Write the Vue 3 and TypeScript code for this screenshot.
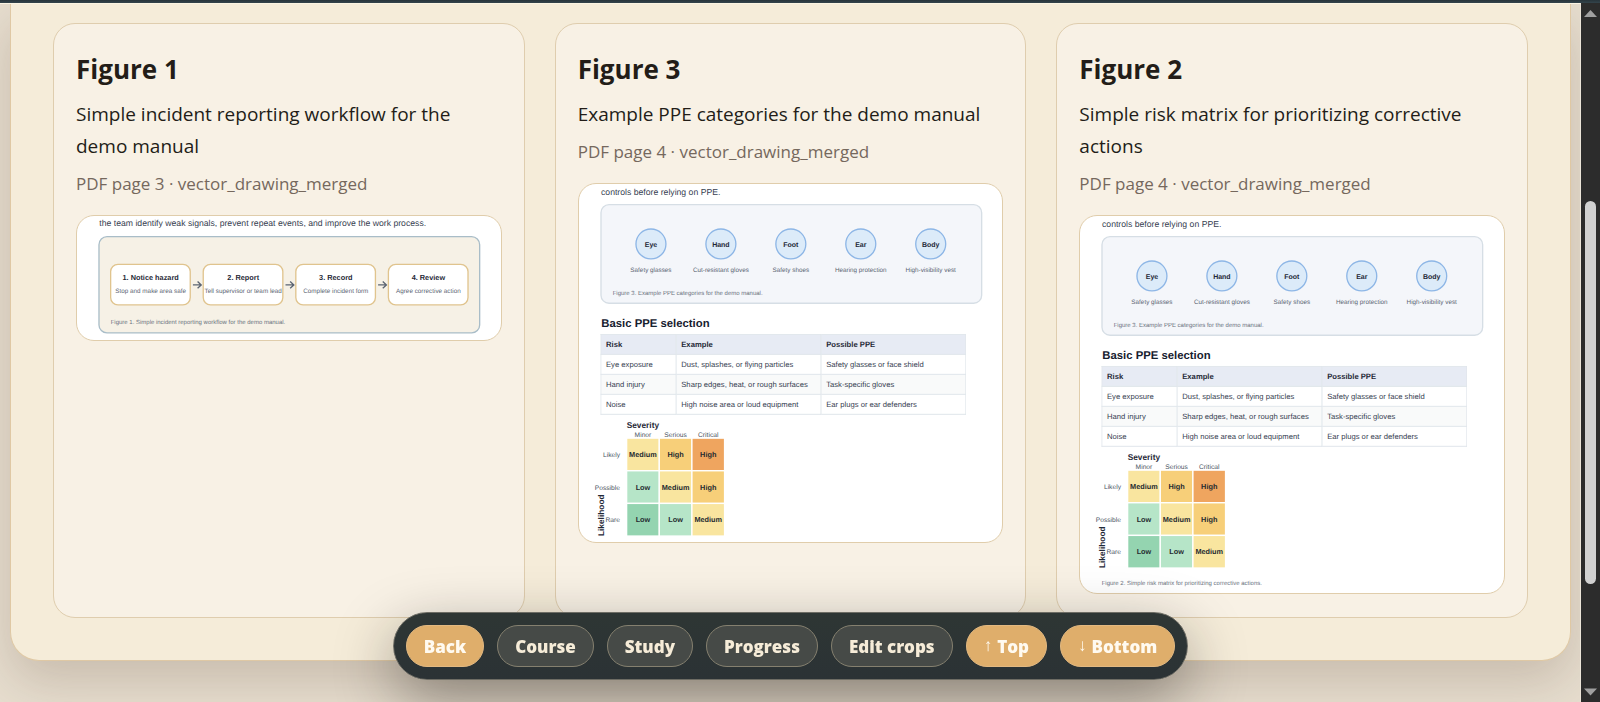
<script setup lang="ts">
interface FigureCard {
  title: string
  caption: string
  source: string
  drawing: 'workflow' | 'ppe'
  height: number
  footnote?: string
}

interface NavItem {
  label: string
  arrow?: string
  accent: boolean
}

const cards: FigureCard[] = [
  {
    title: 'Figure 1',
    caption: 'Simple incident reporting workflow for the demo manual',
    source: 'PDF page 3 · vector_drawing_merged',
    drawing: 'workflow',
    height: 371,
  },
  {
    title: 'Figure 3',
    caption: 'Example PPE categories for the demo manual',
    source: 'PDF page 4 · vector_drawing_merged',
    drawing: 'ppe',
    height: 1076,
  },
  {
    title: 'Figure 2',
    caption: 'Simple risk matrix for prioritizing corrective actions',
    source: 'PDF page 4 · vector_drawing_merged',
    drawing: 'ppe',
    height: 1132,
    footnote: 'Figure 2. Simple risk matrix for prioritizing corrective actions.',
  },
]

const steps = [
  { name: '1. Notice hazard', detail: 'Stop and make area safe' },
  { name: '2. Report', detail: 'Tell supervisor or team lead' },
  { name: '3. Record', detail: 'Complete incident form' },
  { name: '4. Review', detail: 'Agree corrective action' },
]

const gear = [
  { part: 'Eye', item: 'Safety glasses' },
  { part: 'Hand', item: 'Cut-resistant gloves' },
  { part: 'Foot', item: 'Safety shoes' },
  { part: 'Ear', item: 'Hearing protection' },
  { part: 'Body', item: 'High-visibility vest' },
]

const selection = [
  ['Eye exposure', 'Dust, splashes, or flying particles', 'Safety glasses or face shield'],
  ['Hand injury', 'Sharp edges, heat, or rough surfaces', 'Task-specific gloves'],
  ['Noise', 'High noise area or loud equipment', 'Ear plugs or ear defenders'],
]

const severities = ['Minor', 'Serious', 'Critical']

const matrix = [
  { likelihood: 'Likely', cells: [['Medium', '#f9e59f'], ['High', '#f7cf79'], ['High', '#efa55f']] },
  { likelihood: 'Possible', cells: [['Low', '#b6e5c8'], ['Medium', '#f9e59f'], ['High', '#f7cf79']] },
  { likelihood: 'Rare', cells: [['Low', '#94d4b0'], ['Low', '#b6e5c8'], ['Medium', '#f9e59f']] },
]

const navItems: NavItem[] = [
  { label: 'Back', accent: true },
  { label: 'Course', accent: false },
  { label: 'Study', accent: false },
  { label: 'Progress', accent: false },
  { label: 'Edit crops', accent: false },
  { label: 'Top', arrow: '↑', accent: true },
  { label: 'Bottom', arrow: '↓', accent: true },
]
</script>

<template>
  <div class="shell">
    <div class="topbar"></div>
    <div class="viewport">
      <main class="page">
        <section class="panel">
          <article v-for="card in cards" :key="card.title" class="card">
            <h2 class="title">{{ card.title }}</h2>
            <p class="caption">{{ card.caption }}</p>
            <p class="source">{{ card.source }}</p>
            <figure class="frame" :aria-label="card.caption">
              <svg class="drawing" :viewBox="`0 0 1272 ${card.height}`">
                <template v-if="card.drawing === 'workflow'">
                  <text x="67" y="31" class="body-text">the team identify weak signals, prevent repeat events, and improve the work process.</text>
                  <rect x="66" y="62" width="1143" height="289" rx="24" class="flow-panel" />
                  <g v-for="(step, i) in steps" :key="step.name">
                    <rect :x="101 + i * 278" y="145" width="239" height="122" rx="22" class="step" />
                    <text :x="221 + i * 278" y="192" class="step-name">{{ step.name }}</text>
                    <text :x="221 + i * 278" y="231" class="label">{{ step.detail }}</text>
                    <path
                      v-if="i < 3"
                      class="arrow"
                      :d="`M${348 + i * 278} 207h25m-11 -10l11 10l-11 10`"
                    />
                  </g>
                  <text x="101" y="324" class="footnote">Figure 1. Simple incident reporting workflow for the demo manual.</text>
                </template>

                <template v-else>
                  <text x="66" y="32" class="body-text">controls before relying on PPE.</text>
                  <rect x="66" y="62" width="1143" height="296" rx="24" class="gear-panel" />
                  <g v-for="(g, i) in gear" :key="g.part">
                    <circle :cx="216 + i * 210" cy="180" r="45" class="gear" />
                    <text :x="216 + i * 210" y="188" class="gear-name">{{ g.part }}</text>
                    <text :x="216 + i * 210" y="264" class="label">{{ g.item }}</text>
                  </g>
                  <text x="101" y="332" class="footnote">Figure 3. Example PPE categories for the demo manual.</text>
                  <text x="67" y="428" class="heading">Basic PPE selection</text>
                  <foreignObject x="64" y="450" width="1098" height="246">
                    <table class="selection">
                      <colgroup>
                        <col class="col-risk" />
                        <col class="col-wide" />
                        <col class="col-wide" />
                      </colgroup>
                      <thead>
                        <tr><th>Risk</th><th>Example</th><th>Possible PPE</th></tr>
                      </thead>
                      <tbody>
                        <tr v-for="row in selection" :key="row[0]">
                          <td v-for="cell in row" :key="cell">{{ cell }}</td>
                        </tr>
                      </tbody>
                    </table>
                  </foreignObject>
                  <text x="143" y="733" class="axis">Severity</text>
                  <text v-for="(s, i) in severities" :key="s" :x="192 + i * 98" y="761" class="level">{{ s }}</text>
                  <g v-for="(row, r) in matrix" :key="row.likelihood">
                    <text x="123" :y="820 + r * 98" class="level end">{{ row.likelihood }}</text>
                    <g v-for="(cell, i) in row.cells" :key="i">
                      <rect :x="143 + i * 98" :y="763 + r * 98" width="98" height="98" :fill="cell[1]" class="cell" />
                      <text :x="192 + i * 98" :y="820 + r * 98" class="rating">{{ cell[0] }}</text>
                    </g>
                  </g>
                  <text transform="translate(75 1057) rotate(-90)" class="axis">Likelihood</text>
                  <text v-if="card.footnote" x="65" y="1107" class="footnote">{{ card.footnote }}</text>
                </template>
              </svg>
            </figure>
          </article>
        </section>
      </main>

      <div class="scrollbar" aria-hidden="true">
        <svg class="scroll-arrow" viewBox="0 0 19 20"><path d="M9.5 7L16 14H3z" /></svg>
        <div class="gap-above"></div>
        <div class="thumb"></div>
        <div class="gap-below"></div>
        <svg class="scroll-arrow" viewBox="0 0 19 20"><path d="M9.5 13.5L16 6.5H3z" /></svg>
      </div>
    </div>

    <div class="dock">
      <nav class="nav" aria-label="Page">
        <button v-for="item in navItems" :key="item.label" type="button" class="pill" :class="{ accent: item.accent }">
          <span v-if="item.arrow" class="glyph">{{ item.arrow }}</span>{{ item.label }}
        </button>
      </nav>
    </div>
  </div>
</template>

<style>
body {
  margin: 0;
  background: #e7decf;
}
</style>

<style scoped>
.shell {
  display: flex;
  flex-direction: column;
  height: 100vh;
  overflow: hidden;
  font-family: "Open Sans", "Noto Sans", sans-serif;
  color: #231d18;
}

.topbar {
  flex: none;
  height: 3px;
  background: linear-gradient(#27343a, #34444c);
}

.viewport {
  flex: 1;
  display: flex;
  min-height: 0;
}

.page {
  flex: 1;
  min-width: 0;
  overflow: hidden;
  padding: 0 9px 0 10px;
  border-top: 1px solid #fbf4e2;
  border-right: 1px solid #ebe4d8;
  background: #e7decf;
}

.panel {
  display: grid;
  grid-template-columns: repeat(3, minmax(0, 1fr));
  gap: 30px;
  padding: 19px 42px 42px;
  border: 1px solid #dfc8a4;
  border-top: 0;
  border-radius: 0 0 29px 29px;
  background: #f5ecd9;
  box-shadow: 0 20px 50px rgba(74, 50, 34, 0.2);
}

.card {
  padding: 22px 22px 23px;
  border: 1px solid #dfcdae;
  border-radius: 22px;
  background: #f8f1e5;
}

.title {
  margin: 0 0 6px;
  font-size: 26px;
  line-height: 46px;
  font-weight: 700;
}

.caption {
  margin: 0 0 8px;
  font-size: 19px;
  line-height: 32px;
}

.source {
  margin: 0 0 17px;
  font-size: 17px;
  line-height: 28px;
  color: #75685d;
}

.frame {
  margin: 0;
  overflow: hidden;
  border: 1px solid #e0cdab;
  border-radius: 18px;
  background: #fff;
}

.drawing {
  display: block;
  width: 100%;
  font-family: "Liberation Sans", Arial, sans-serif;
  text-rendering: geometricPrecision;
}

.body-text {
  font-size: 26px;
  fill: #374151;
}

.flow-panel {
  fill: #f6f1e6;
  stroke: #a9bdc8;
  stroke-width: 4px;
}

.step {
  fill: #fff;
  stroke: #e0c48e;
  stroke-width: 4px;
}

.step-name {
  font-size: 22px;
  font-weight: 700;
  text-anchor: middle;
  fill: #1f2937;
}

.label {
  font-size: 19px;
  text-anchor: middle;
  fill: #5b6573;
}

.footnote {
  font-size: 18px;
  fill: #6b7280;
}

.arrow {
  fill: none;
  stroke: #5b6472;
  stroke-width: 4px;
}

.gear-panel {
  fill: #f4f6fa;
  stroke: #d6dee5;
  stroke-width: 4px;
}

.gear {
  fill: #dcebf9;
  stroke: #8db6e6;
  stroke-width: 4px;
}

.gear-name {
  font-size: 21px;
  font-weight: 700;
  text-anchor: middle;
  fill: #1f2937;
}

.heading {
  font-size: 34px;
  font-weight: 700;
  fill: #16202e;
}

.selection {
  width: 1096px;
  table-layout: fixed;
  border-collapse: collapse;
  font-size: 23px;
  line-height: 28px;
  color: #374151;
}

.col-risk {
  width: 226px;
}

.col-wide {
  width: 435px;
}

.selection th,
.selection td {
  height: 60px;
  box-sizing: border-box;
  padding: 0 14px;
  border: 3px solid #e0e6eb;
  text-align: left;
  vertical-align: middle;
}

.selection th {
  background: #e7ebf4;
  color: #1f2937;
}

.selection tbody tr:nth-child(2) {
  background: #f9fafa;
}

.axis {
  font-size: 25px;
  font-weight: 700;
  fill: #1f2937;
}

.level {
  font-size: 20px;
  text-anchor: middle;
  fill: #4b5563;
}

.end {
  text-anchor: end;
}

.cell {
  stroke: #fff;
  stroke-width: 4px;
}

.rating {
  font-size: 22px;
  font-weight: 700;
  text-anchor: middle;
  fill: #252b30;
}

.scrollbar {
  flex: none;
  display: flex;
  flex-direction: column;
  align-items: center;
  width: 19px;
  background: #2c2c2c;
}

.scroll-arrow {
  flex: none;
  width: 19px;
  height: 20px;
  fill: #a0a0a0;
}

.gap-above {
  flex: 178;
}

.thumb {
  flex: 383;
  width: 11px;
  border-radius: 6px;
  background: #d1d1d1;
}

.gap-below {
  flex: 98;
}

.dock {
  position: fixed;
  right: 19px;
  bottom: 22px;
  left: 0;
  display: flex;
  justify-content: center;
}

.nav {
  display: flex;
  gap: 13px;
  padding: 12px;
  border: 1px solid #6d6c64;
  border-radius: 34px;
  background: linear-gradient(#2e3634, #2b3235);
  box-shadow: 0 20px 60px rgba(24, 18, 14, 0.42);
}

.pill {
  display: flex;
  align-items: center;
  gap: 5px;
  height: 42px;
  padding: 0 17px;
  border: 1px solid #85806f;
  border-radius: 21px;
  background: #464a47;
  color: #f6ecd8;
  font-family: inherit;
  font-size: 17px;
  font-weight: 800;
  white-space: nowrap;
}

.accent {
  border-color: #e3b981;
  background: #dfae6b;
  color: #fffaf0;
}

.glyph {
  font-family: "Liberation Sans", Arial, sans-serif;
  font-weight: 400;
}
</style>
